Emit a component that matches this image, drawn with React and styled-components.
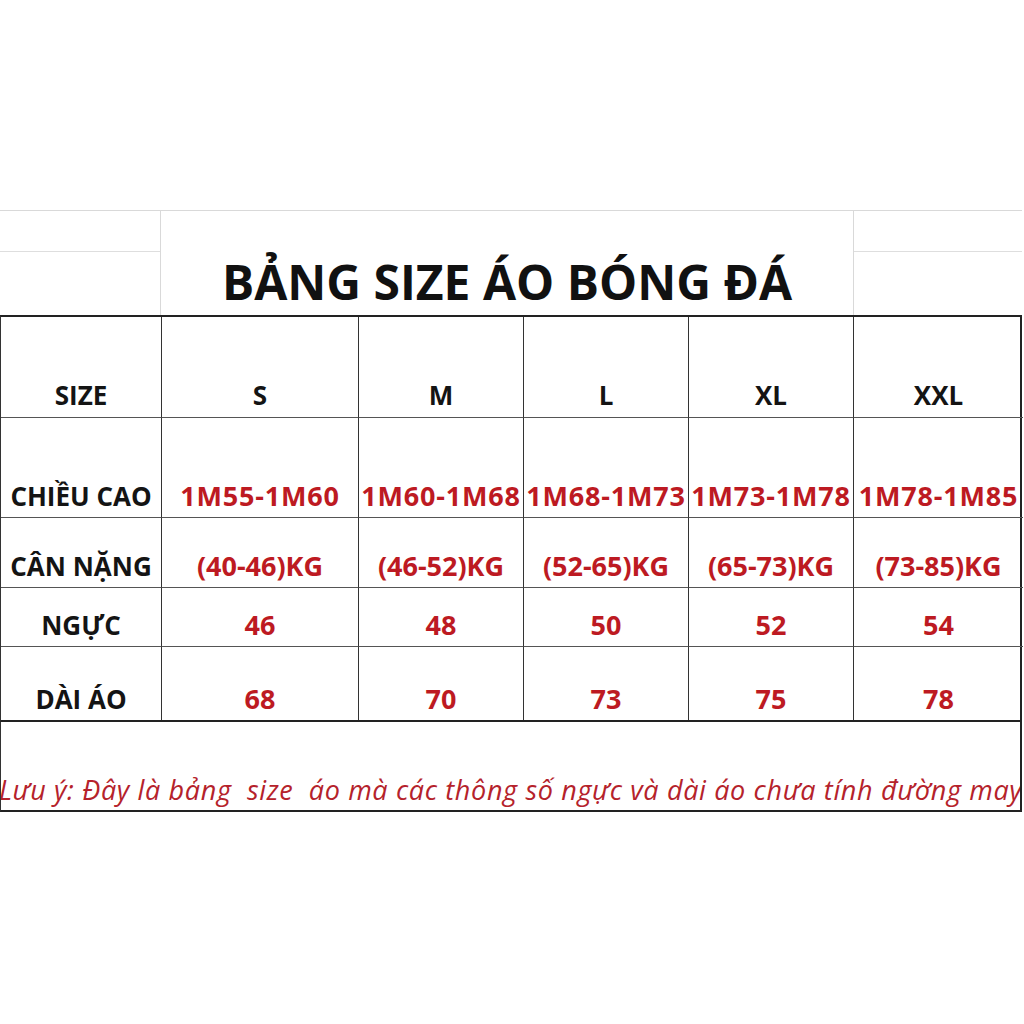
import React from 'react';
import styled, { createGlobalStyle } from 'styled-components';

const Global = createGlobalStyle`
  html, body {
    margin: 0;
    padding: 0;
    background: #fff;
  }
  body {
    font-family: "Open Sans", "Liberation Sans", sans-serif;
  }
`;

const Page = styled.div`
  width: 1024px;
  height: 1024px;
  padding-top: 210px;
  box-sizing: border-box;
  background: #fff;
`;

const Sheet = styled.div`
  width: 1022px;
`;

const TopBand = styled.div`
  display: grid;
  grid-template-columns: 161px 692px 169px;
  height: 105px;
  border-top: 1px solid #d9d9d9;
  box-sizing: border-box;
`;

const SideCell = styled.div`
  display: grid;
  grid-template-rows: 41px 1fr;
  border-left: ${(p) => (p.right ? '1px solid #d9d9d9' : 'none')};
  border-right: ${(p) => (p.right ? 'none' : '1px solid #d9d9d9')};
  & > div:first-child {
    border-bottom: 1px solid #dedede;
  }
`;

const TitleCell = styled.div`
  display: flex;
  align-items: flex-end;
  justify-content: center;
  padding-bottom: 9px;
  box-sizing: border-box;
`;

const Title = styled.h1`
  margin: 0;
  font-size: 48px;
  font-weight: 700;
  color: #111;
  line-height: 1;
`;

const Grid = styled.div`
  display: grid;
  grid-template-columns: 161px 197px 165px 165px 165px 169px;
  grid-template-rows: 101px 100px 70px 59px 73px;
  border-top: 2px solid #222;
  border-bottom: 2px solid #222;
  border-left: 1px solid #333;
  border-right: 2px solid #222;
  box-sizing: border-box;
`;

const Cell = styled.div`
  display: flex;
  align-items: flex-end;
  justify-content: center;
  padding-bottom: ${(p) => p.pb || 6}px;
  box-sizing: border-box;
  border-right: ${(p) => (p.last ? 'none' : '1px solid #333')};
  border-bottom: ${(p) => (p.lastRow ? 'none' : '1.5px solid #555')};
  white-space: nowrap;
  font-weight: 700;
  line-height: 1;
  font-size: ${(p) => (p.red ? 27 : 26)}px;
  color: ${(p) => (p.red ? '#bd1a22' : '#141414')};
  letter-spacing: ${(p) => (p.wide ? '0.8px' : '0')};
`;

const Note = styled.div`
  height: 90px;
  border-left: 1px solid #333;
  border-right: 2px solid #222;
  border-bottom: 2px solid #222;
  box-sizing: border-box;
  display: flex;
  align-items: flex-end;
  padding-bottom: 7px;
  overflow: hidden;
`;

const NoteText = styled.span`
  font-style: italic;
  font-size: 27px;
  line-height: 1;
  color: #b5222b;
  white-space: pre;
  margin-left: -2px;
  letter-spacing: 0.65px;
`;

const sizes = ['S', 'M', 'L', 'XL', 'XXL'];

const rows = [
  { label: 'CHIỀU CAO', values: ['1M55-1M60', '1M60-1M68', '1M68-1M73', '1M73-1M78', '1M78-1M85'], wide: true },
  { label: 'CÂN NẶNG', values: ['(40-46)KG', '(46-52)KG', '(52-65)KG', '(65-73)KG', '(73-85)KG'] },
  { label: 'NGỰC', values: ['46', '48', '50', '52', '54'] },
  { label: 'DÀI ÁO', values: ['68', '70', '73', '75', '78'] },
];

export default function App() {
  return (
    <Page>
      <Global />
      <Sheet>
        <TopBand>
          <SideCell>
            <div />
            <div />
          </SideCell>
          <TitleCell>
            <Title>BẢNG SIZE ÁO BÓNG ĐÁ</Title>
          </TitleCell>
          <SideCell right>
            <div />
            <div />
          </SideCell>
        </TopBand>
        <Grid>
          <Cell pb={9}>SIZE</Cell>
          {sizes.map((s, i) => (
            <Cell key={s} pb={9} last={i === sizes.length - 1}>
              {s}
            </Cell>
          ))}
          {rows.map((r, ri) => (
            <React.Fragment key={r.label}>
              <Cell pb={8} lastRow={ri === rows.length - 1}>
                {r.label}
              </Cell>
              {r.values.map((v, i) => (
                <Cell
                  key={v + i}
                  red
                  pb={8}
                  wide={r.wide}
                  last={i === r.values.length - 1}
                  lastRow={ri === rows.length - 1}
                >
                  {v}
                </Cell>
              ))}
            </React.Fragment>
          ))}
        </Grid>
        <Note>
          <NoteText>
            Lưu ý: Đây là bảng  size  áo mà các thông số ngực và dài áo chưa tính đường may
          </NoteText>
        </Note>
      </Sheet>
    </Page>
  );
}
